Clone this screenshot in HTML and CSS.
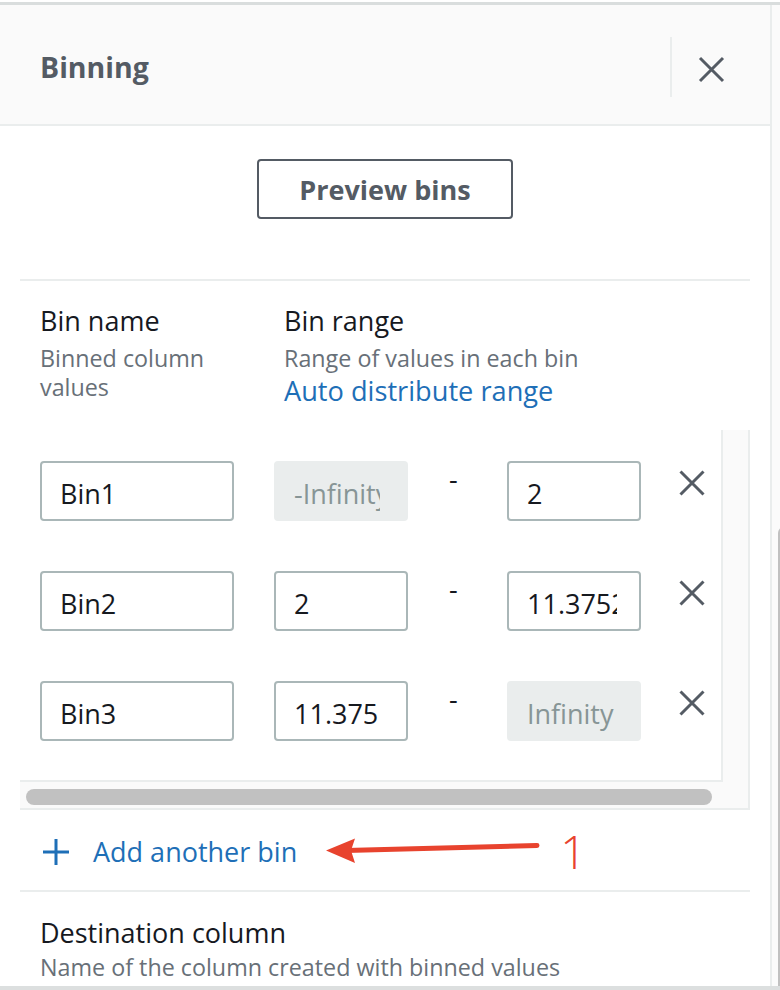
FILE: index.html
```html
<!DOCTYPE html>
<html lang="en">
<head>
<meta charset="utf-8">
<title>Binning</title>
<link rel="stylesheet" href="styles.css">
</head>
<body>
<div class="page">
  <div class="top-edge"></div>
  <div class="main">
    <aside class="panel">
      <header class="panel-header">
        <h2 class="title">Binning</h2>
        <div class="header-actions">
          <span class="vdivider"></span>
          <svg class="close-icon" width="27" height="27" viewBox="0 0 27 27" aria-label="Close">
            <path d="M2 2 L25 25 M25 2 L2 25" stroke="#545b64" stroke-width="3" fill="none"/>
          </svg>
        </div>
      </header>
      <div class="panel-body">
        <div class="preview-row">
          <button class="btn" type="button">Preview bins</button>
        </div>
        <div class="sep"></div>
        <div class="col-heads">
          <div class="col">
            <div class="label">Bin name</div>
            <div class="desc">Binned column values</div>
          </div>
          <div class="col">
            <div class="label">Bin range</div>
            <div class="desc">Range of values in each bin</div>
            <div class="link">Auto distribute range</div>
          </div>
        </div>
        <div class="bins-scroll">
          <div class="bins-content">
            <div class="bin-row">
              <input class="inp inp-name" type="text" value="Bin1">
              <input class="inp inp-range clip-from" type="text" value="-Infinity" disabled>
              <span class="dash">-</span>
              <input class="inp inp-range" type="text" value="2">
              <svg class="row-x" width="26" height="26" viewBox="0 0 26 26"><path d="M1.5 1.5 L24.5 24.5 M24.5 1.5 L1.5 24.5" stroke="#545b64" stroke-width="3" fill="none"/></svg>
            </div>
            <div class="bin-row">
              <input class="inp inp-name" type="text" value="Bin2">
              <input class="inp inp-range" type="text" value="2">
              <span class="dash">-</span>
              <input class="inp inp-range clip-to" type="text" value="11.37525">
              <svg class="row-x" width="26" height="26" viewBox="0 0 26 26"><path d="M1.5 1.5 L24.5 24.5 M24.5 1.5 L1.5 24.5" stroke="#545b64" stroke-width="3" fill="none"/></svg>
            </div>
            <div class="bin-row">
              <input class="inp inp-name" type="text" value="Bin3">
              <input class="inp inp-range" type="text" value="11.375">
              <span class="dash">-</span>
              <input class="inp inp-range" type="text" value="Infinity" disabled>
              <svg class="row-x" width="26" height="26" viewBox="0 0 26 26"><path d="M1.5 1.5 L24.5 24.5 M24.5 1.5 L1.5 24.5" stroke="#545b64" stroke-width="3" fill="none"/></svg>
            </div>
          </div>
          <div class="vtrack"></div>
          <div class="htrack"><div class="hthumb"></div></div>
        </div>
        <div class="add-row">
          <svg class="plus" width="28" height="28" viewBox="0 0 28 28"><path d="M14 1 V27 M1 14 H27" stroke="#1e6fb7" stroke-width="3" fill="none"/></svg>
          <span class="add-link">Add another bin</span>
          <svg class="arrow" width="214" height="30" viewBox="0 0 214 30">
            <path d="M20 13.5 L211 8.5" stroke="#e8432e" stroke-width="5" stroke-linecap="round" fill="none"/>
            <path d="M0 13.5 L29 1.5 L25 13.5 L29 26 Z" fill="#e8432e"/>
          </svg>
          <span class="annot">1</span>
        </div>
        <div class="sep"></div>
        <div class="dest">
          <div class="label">Destination column</div>
          <div class="desc">Name of the column created with binned values</div>
        </div>
      </div>
    </aside>
    <div class="page-scroll"><div class="page-thumb"></div></div>
  </div>
  <div class="bottom-edge"></div>
</div>
</body>
</html>
```

FILE: styles.css
```css
* { box-sizing: border-box; }
html, body { margin: 0; padding: 0; }
body {
  font-family: "Open Sans", "Liberation Sans", sans-serif;
  background: #ffffff;
  width: 780px;
  height: 990px;
  overflow: hidden;
}
.page { display: flex; flex-direction: column; height: 990px; }
.top-edge { flex: none; height: 3px; margin-top: 2px; background: #d9dddd; }
.main { flex: 1; display: flex; min-height: 0; overflow: hidden; }
.bottom-edge { flex: none; height: 4px; background: #dcdfdf; }

.panel { flex: none; width: 772px; border-right: 2px solid #eaeded; background: #fff; }
.page-scroll { flex: 1; background: #fbfbfb; overflow: hidden; }
.page-thumb { margin-top: 522px; margin-left: 6px; width: 12px; height: 600px; border-radius: 6px; background: #c1c1c1; }

.panel-header {
  height: 121px;
  background: #fafafa;
  border-bottom: 2px solid #eaeded;
  display: flex;
  align-items: center;
  padding: 0 45px 0 40px;
}
.title {
  flex: 1;
  margin: 5px 0 0;
  font-size: 28.5px;
  line-height: 34px;
  font-weight: 700;
  color: #545b64;
}
.header-actions { display: flex; align-items: center; margin-top: 5px; }
.vdivider { width: 2px; height: 60px; background: #eaeded; }
.close-icon { display: block; margin-left: 26px; margin-top: 4px; }

.panel-body { padding: 0 20px; }
.preview-row { display: flex; justify-content: center; padding: 33px 0 60px; }
.btn {
  width: 256px;
  height: 60px;
  border: 2px solid #545b64;
  border-radius: 4px;
  background: #fff;
  font-family: "Open Sans", "Liberation Sans", sans-serif;
  font-size: 27px;
  font-weight: 700;
  line-height: 1;
  color: #545b64;
  padding: 0;
}
.sep { height: 2px; background: #eaeded; }

.col-heads {
  display: grid;
  grid-template-columns: 200px 1fr;
  column-gap: 44px;
  padding: 23px 20px 0;
  margin-bottom: 21px;
}
.label { font-size: 27px; line-height: 34px; color: #16191f; margin-bottom: 6px; }
.desc { font-size: 23.3px; line-height: 29px; color: #687078; }
.link { font-size: 27.2px; line-height: 36px; color: #1e6fb7; }

.bins-scroll {
  display: grid;
  grid-template-columns: 703px 1fr;
  grid-template-rows: auto 26px;
  background: #fafafa;
  border-right: 2px solid #eaeded;
  border-bottom: 2px solid #eaeded;
}
.bins-content {
  background: #fff;
  border-right: 2px solid #eaeded;
  border-bottom: 2px solid #eaeded;
  padding: 31px 0 39px 20px;
  display: flex;
  flex-direction: column;
  gap: 50px;
}
.htrack { grid-column: 1 / -1; padding: 7px 0 0 6px; }
.hthumb { width: 686px; height: 16px; border-radius: 8px; background: #c1c1c1; }

.bin-row { display: flex; align-items: flex-start; height: 60px; }
.inp {
  height: 60px;
  border: 2px solid #aab7b8;
  border-radius: 4px;
  background: #fff;
  font-family: "Open Sans", "Liberation Sans", sans-serif;
  font-size: 27px;
  color: #16191f;
  padding: 4px 4px 0 18px;
  outline: none;
  margin: 0;
}
.inp-name { width: 194px; margin-right: 40px; }
.inp-range { width: 134px; }
.inp:disabled {
  background: #eaeded;
  border-color: #eaeded;
  color: #879596;
  -webkit-text-fill-color: #879596;
  opacity: 1;
}
.clip-from { padding-right: 26px; }
.clip-to { padding-right: 22px; }
.dash {
  width: 99px;
  padding-left: 41px;
  font-size: 27px;
  line-height: 36px;
  color: #16191f;
}
.row-x { display: block; margin-left: 38px; margin-top: 9px; }

.add-row { display: flex; align-items: center; padding: 24px 20px 20px 22px; }
.plus { display: block; flex: none; margin-right: 23px; }
.add-link { font-size: 27px; line-height: 36px; color: #1e6fb7; }
.arrow { display: block; flex: none; margin-left: 29px; }
.annot {
  margin-left: 20px;
  margin-top: -3px;
  font-size: 46px;
  font-weight: 300;
  line-height: 36px;
  color: #e8432e;
}

.dest { padding: 24px 20px 0; }
.dest .label { margin-bottom: 3px; }
```
